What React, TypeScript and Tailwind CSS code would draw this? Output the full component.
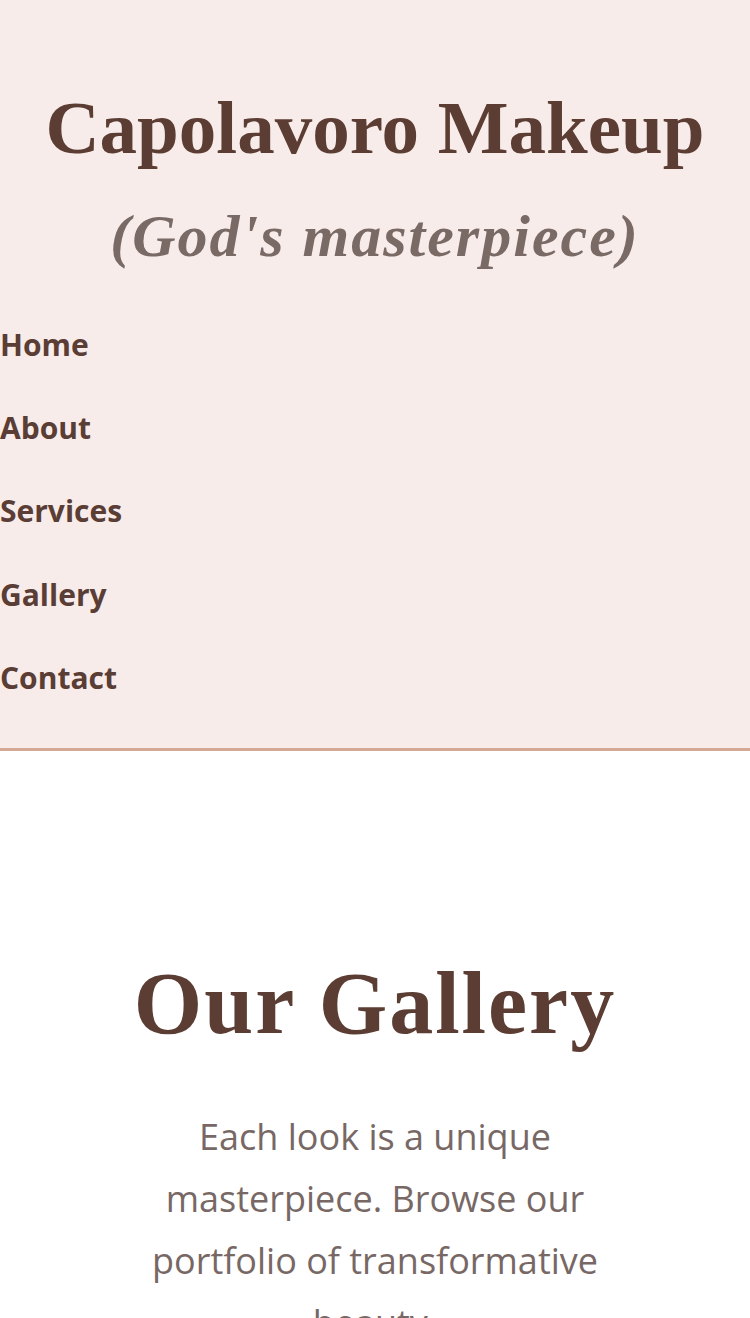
import React from 'react';

const navItems = ['Home', 'About', 'Services', 'Gallery', 'Contact'];

export default function App() {
  return (
    <div className="w-full min-h-screen bg-white text-[#5c3d33]">
      <header className="w-full bg-[#f8ecea] border-b-[3px] border-[#d4a996] pt-[87px] pb-[28px]">
        <h1 className="text-center font-['Liberation_Serif',Georgia,serif] font-bold text-[75px] leading-[82px] text-[#5c3d33]">
          Capolavoro Makeup
        </h1>
        <p className="mt-[35px] text-center font-['Liberation_Serif',Georgia,serif] font-bold italic text-[60px] leading-[64px] tracking-[2px] text-[#7a6a66]">
          (God's masterpiece)
        </p>
        <nav className="mt-[35px]">
          <ul className="flex flex-col">
            {navItems.map((item) => (
              <li key={item} className="h-[83.33px] flex items-center">
                <a href="#" className="font-['Open_Sans',sans-serif] font-bold text-[30px] leading-[40px] text-[#5a3d35]">
                  {item}
                </a>
              </li>
            ))}
          </ul>
        </nav>
      </header>

      <section className="w-full px-6 pt-[203px] pb-16 flex flex-col items-center">
        <h2 className="text-center font-['Liberation_Serif',Georgia,serif] font-bold text-[88px] leading-[100px] tracking-[2px] text-[#5c3d33]">
          Our Gallery
        </h2>
        <p className="mt-[52px] max-w-[480px] text-center font-['Open_Sans',sans-serif] text-[36px] leading-[62px] text-[#786865]">
          Each look is a unique masterpiece. Browse our portfolio of transformative beauty.
        </p>
      </section>
    </div>
  );
}
